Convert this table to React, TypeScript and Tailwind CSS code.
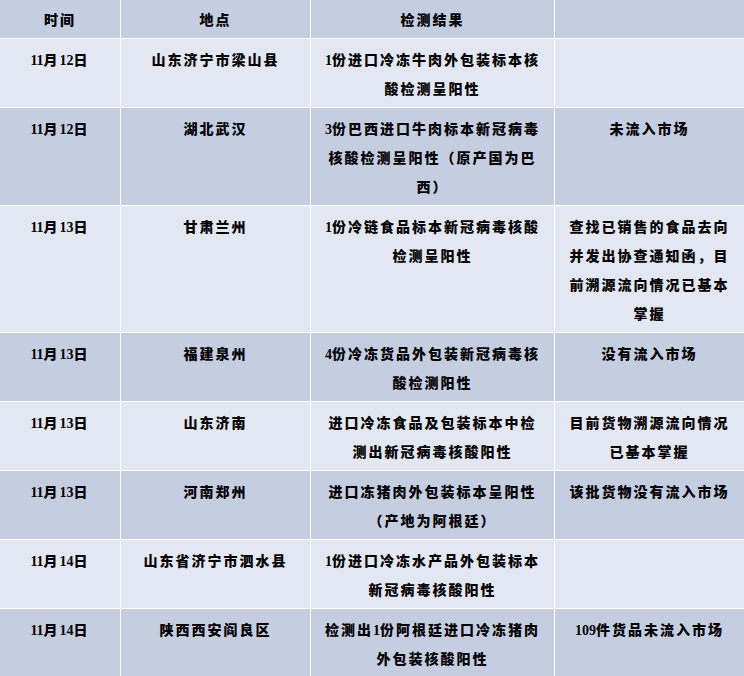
import React from "react";

type Row = { date: string; place: string; result: string[]; note: string[] };

const rows: Row[] = [
  { date: "11月12日", place: "山东济宁市梁山县", result: ["1份进口冷冻牛肉外包装标本核", "酸检测呈阳性"], note: [] },
  { date: "11月12日", place: "湖北武汉", result: ["3份巴西进口牛肉标本新冠病毒", "核酸检测呈阳性（原产国为巴", "西）"], note: ["未流入市场"] },
  { date: "11月13日", place: "甘肃兰州", result: ["1份冷链食品标本新冠病毒核酸", "检测呈阳性"], note: ["查找已销售的食品去向", "并发出协查通知函，目", "前溯源流向情况已基本", "掌握"] },
  { date: "11月13日", place: "福建泉州", result: ["4份冷冻货品外包装新冠病毒核", "酸检测阳性"], note: ["没有流入市场"] },
  { date: "11月13日", place: "山东济南", result: ["进口冷冻食品及包装标本中检", "测出新冠病毒核酸阳性"], note: ["目前货物溯源流向情况", "已基本掌握"] },
  { date: "11月13日", place: "河南郑州", result: ["进口冻猪肉外包装标本呈阳性", "（产地为阿根廷）"], note: ["该批货物没有流入市场"] },
  { date: "11月14日", place: "山东省济宁市泗水县", result: ["1份进口冷冻水产品外包装标本", "新冠病毒核酸阳性"], note: [] },
  { date: "11月14日", place: "陕西西安阎良区", result: ["检测出1份阿根廷进口冷冻猪肉", "外包装核酸阳性"], note: ["109件货品未流入市场"] },
];

function Txt({ s }: { s: string }) {
  const parts = s.split(/(\d+)/);
  return (
    <>
      {parts.map((p, i) =>
        /^\d+$/.test(p) ? (
          <span key={i} className="tracking-normal font-bold">
            {p}
          </span>
        ) : (
          <span key={i}>{p}</span>
        )
      )}
    </>
  );
}

function Cell({ lines, bg, header }: { lines: string[]; bg: string; header?: boolean }) {
  return (
    <div
      className={`${bg} text-center whitespace-nowrap leading-[29px] ${header ? "pt-[6px] pb-[3px]" : "pt-[7px] pb-[3px]"}`}
    >
      {lines.map((l, i) => (
        <div key={i}>
          <Txt s={l} />
        </div>
      ))}
    </div>
  );
}

export default function App() {
  const dark = "bg-[#c5cee0]";
  const light = "bg-[#e3e7f1]";
  return (
    <div className="w-[744px] h-[676px] overflow-hidden bg-white">
      <div
        className="grid grid-cols-[120px_189px_243px_189px] gap-px bg-white text-[14px] font-black tracking-[2px] text-black"
        style={{ fontFamily: '"Liberation Serif", "Noto Sans CJK SC", serif' }}
      >
        <Cell lines={["时间"]} bg={dark} header />
        <Cell lines={["地点"]} bg={dark} header />
        <Cell lines={["检测结果"]} bg={dark} header />
        <Cell lines={[]} bg={dark} header />
        {rows.map((r, i) => {
          const bg = i % 2 === 0 ? light : dark;
          return (
            <React.Fragment key={i}>
              <Cell lines={[r.date]} bg={bg} />
              <Cell lines={[r.place]} bg={bg} />
              <Cell lines={r.result} bg={bg} />
              <Cell lines={r.note} bg={bg} />
            </React.Fragment>
          );
        })}
      </div>
    </div>
  );
}
